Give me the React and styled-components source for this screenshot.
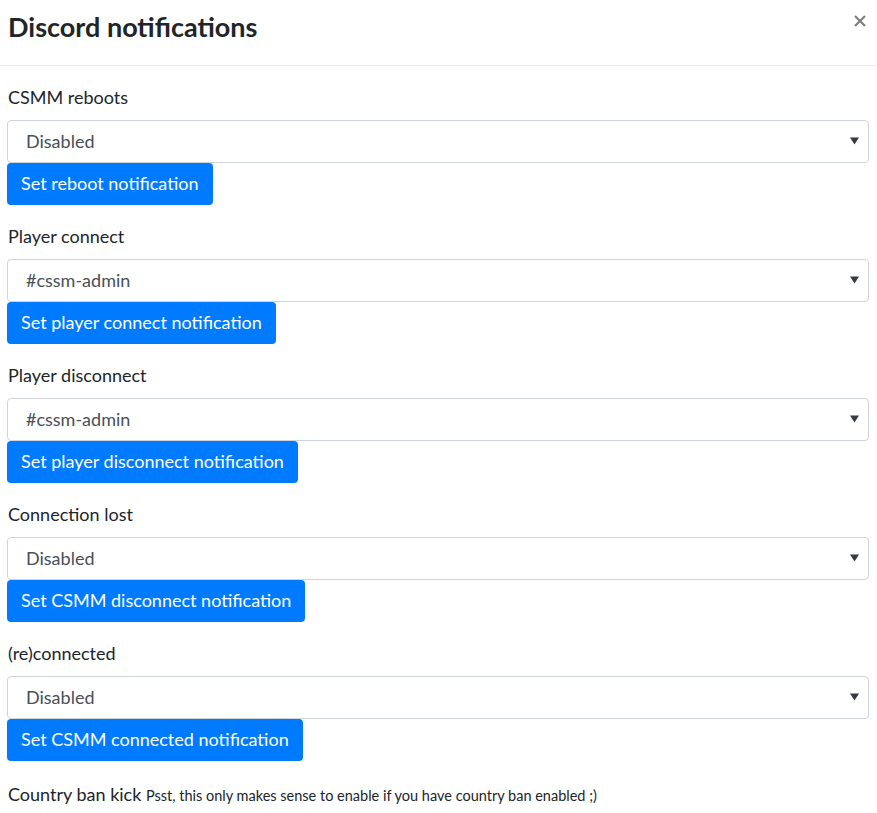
import React, { useState } from "react";
import styled, { createGlobalStyle } from "styled-components";

const GlobalStyle = createGlobalStyle`
  html, body {
    margin: 0;
    padding: 0;
    background: #fff;
    font-family: Lato, "Open Sans", "Liberation Sans", sans-serif;
    color: #212529;
  }
  * { box-sizing: border-box; }
`;

const channels = ["Disabled", "#cssm-admin", "#general"];

const sections = [
  { label: "CSMM reboots", value: "Disabled", button: "Set reboot notification" },
  { label: "Player connect", value: "#cssm-admin", button: "Set player connect notification" },
  { label: "Player disconnect", value: "#cssm-admin", button: "Set player disconnect notification" },
  { label: "Connection lost", value: "Disabled", button: "Set CSMM disconnect notification" },
  { label: "(re)connected", value: "Disabled", button: "Set CSMM connected notification" },
];

function Section({ label, value, button }) {
  const [current, setCurrent] = useState(value);

  return (
    <StGroup>
      <StLabel>{label}</StLabel>
      <StSelectWrap>
        <StSelect value={current} onChange={(e) => setCurrent(e.target.value)}>
          {channels.map((c) => (
            <option key={c} value={c}>
              {c}
            </option>
          ))}
        </StSelect>
        <StArrow viewBox="0 0 10 8" aria-hidden="true">
          <path d="M0 0h10L5 8z" fill="#343a40" />
        </StArrow>
      </StSelectWrap>
      <StBtn type="button">{button}</StBtn>
    </StGroup>
  );
}

export default function App() {
  return (
    <>
      <GlobalStyle />
      <StModal>
        <StHeader>
          <StTitle>Discord notifications</StTitle>
          <StClose type="button" aria-label="Close">
            <svg width="12" height="12" viewBox="0 0 12 12">
              <path d="M1 1L11 11M11 1L1 11" stroke="#7f7f7f" strokeWidth="2.2" />
            </svg>
          </StClose>
        </StHeader>
        <StBody>
          {sections.map((s) => (
            <Section key={s.label} {...s} />
          ))}
          <StLabel $note>
            Country ban kick <StSmall>Psst, this only makes sense to enable if you have country ban enabled ;)</StSmall>
          </StLabel>
        </StBody>
      </StModal>
    </>
  );
}

const StModal = styled.div`
  width: 877px;
  background: #fff;
`;

const StHeader = styled.div`
  display: flex;
  justify-content: space-between;
  align-items: flex-start;
  padding: 11px 8px 13px 8px;
  border-bottom: 1px solid #e9ecef;
  height: 66px;
`;

const StTitle = styled.h5`
  margin: 0;
  font-size: 27px;
  font-weight: 700;
  line-height: 32px;
  color: #212529;
`;

const StClose = styled.button`
  display: flex;
  border: 0;
  background: transparent;
  padding: 0;
  margin: 4px 3px 0 0;
  cursor: pointer;
`;

const StBody = styled.div`
  padding: 19px 8px 8px 7px;
`;

const StGroup = styled.div`
  display: flex;
  flex-direction: column;
  align-items: flex-start;
  margin-bottom: 19px;
`;

const StLabel = styled.label`
  display: inline-block;
  font-size: 18px;
  line-height: 25px;
  margin: ${(p) => (p.$note ? "2px 0 0 1px" : "0 0 10px 1px")};
  color: #212529;
`;

const StSmall = styled.small`
  font-size: 14.5px;
`;

const StSelectWrap = styled.div`
  position: relative;
  width: 862px;
`;

const StSelect = styled.select`
  display: block;
  width: 100%;
  height: 43px;
  padding: 0 40px 1px 18px;
  font-family: inherit;
  font-size: 18px;
  color: #495057;
  background: #fff;
  border: 1px solid #ced4da;
  border-radius: 4px;
  appearance: none;
  outline: none;
`;

const StArrow = styled.svg`
  position: absolute;
  right: 10px;
  top: 17px;
  width: 9px;
  height: 8px;
  pointer-events: none;
`;

const StBtn = styled.button`
  margin-top: 0;
  height: 42px;
  padding: 0 14px 1px;
  border: 0;
  border-radius: 4px;
  background-color: #007bff;
  color: #fff;
  font-family: inherit;
  font-size: 18px;
  line-height: 41px;
  cursor: pointer;
`;
